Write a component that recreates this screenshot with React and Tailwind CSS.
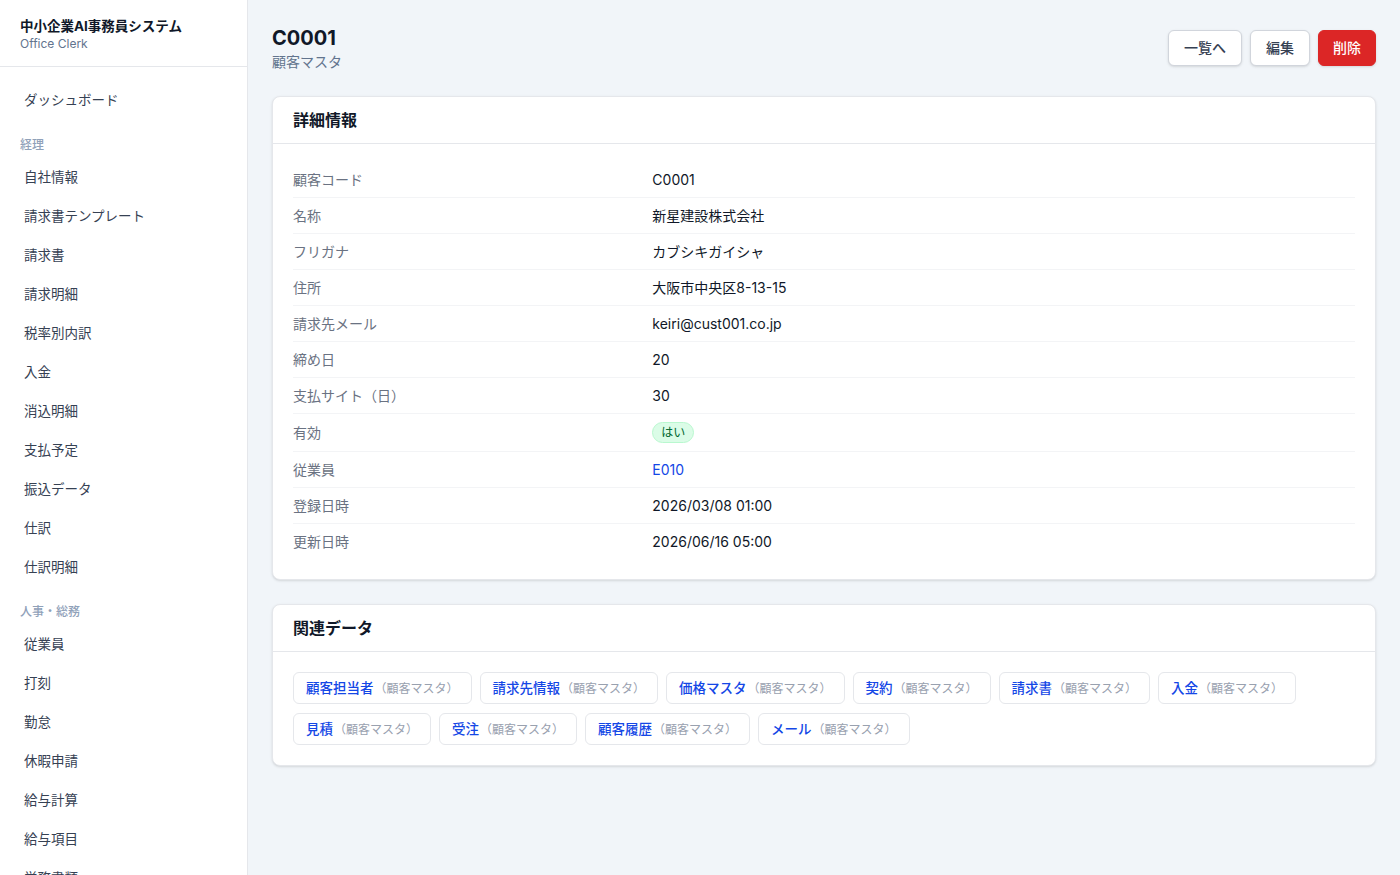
import React from "react";

const FONT = { fontFamily: 'Inter, "Noto Sans CJK JP", "Noto Sans", sans-serif' };

const nav = [
  { type: "item", label: "ダッシュボード" },
  { type: "label", label: "経理" },
  { type: "item", label: "自社情報" },
  { type: "item", label: "請求書テンプレート" },
  { type: "item", label: "請求書" },
  { type: "item", label: "請求明細" },
  { type: "item", label: "税率別内訳" },
  { type: "item", label: "入金" },
  { type: "item", label: "消込明細" },
  { type: "item", label: "支払予定" },
  { type: "item", label: "振込データ" },
  { type: "item", label: "仕訳" },
  { type: "item", label: "仕訳明細" },
  { type: "label", label: "人事・総務" },
  { type: "item", label: "従業員" },
  { type: "item", label: "打刻" },
  { type: "item", label: "勤怠" },
  { type: "item", label: "休暇申請" },
  { type: "item", label: "給与計算" },
  { type: "item", label: "給与項目" },
  { type: "item", label: "労務書類" },
  { type: "item", label: "社会保険" },
];

const rows = [
  ["顧客コード", "C0001"],
  ["名称", "新星建設株式会社"],
  ["フリガナ", "カブシキガイシャ"],
  ["住所", "大阪市中央区8-13-15"],
  ["請求先メール", "keiri@cust001.co.jp"],
  ["締め日", "20"],
  ["支払サイト（日）", "30"],
  ["有効", "badge"],
  ["従業員", "link"],
  ["登録日時", "2026/03/08 01:00"],
  ["更新日時", "2026/06/16 05:00"],
];

const related = [
  "顧客担当者",
  "請求先情報",
  "価格マスタ",
  "契約",
  "請求書",
  "入金",
  "見積",
  "受注",
  "顧客履歴",
  "メール",
];

export default function App() {
  return (
    <div style={FONT} className="flex h-screen w-full overflow-hidden bg-[#f1f5f9] text-gray-900">
      <aside className="flex w-[248px] shrink-0 flex-col overflow-hidden border-r border-gray-200 bg-white">
        <div className="border-b border-gray-200 px-5 pb-[14px] pt-4">
          <div className="text-[13.5px] font-bold leading-5 text-gray-900">中小企業AI事務員システム</div>
          <div className="text-xs leading-4 text-slate-500">Office Clerk</div>
        </div>
        <nav className="flex flex-col px-3 pt-[14px]">
          {nav.map((n, i) =>
            n.type === "label" ? (
              <div key={i} className="px-2 pb-[5px] pt-[17px] text-xs font-medium leading-4 text-slate-400">
                {n.label}
              </div>
            ) : (
              <div key={i} className="rounded-md px-3 py-2.5 text-[13.5px] leading-[19px] text-gray-700">
                {n.label}
              </div>
            )
          )}
        </nav>
      </aside>

      <main className="flex-1 overflow-hidden p-6">
        <div className="mb-6 flex items-center justify-between">
          <div>
            <h1 className="text-xl font-bold leading-7 text-gray-900">C0001</h1>
            <div className="text-sm leading-5 text-slate-500">顧客マスタ</div>
          </div>
          <div className="flex items-center gap-2">
            <button className="h-9 rounded-md border border-gray-300 bg-white px-[15px] text-sm font-medium text-gray-700 shadow-sm">一覧へ</button>
            <button className="h-9 rounded-md border border-gray-300 bg-white px-[15px] text-sm font-medium text-gray-700 shadow-sm">編集</button>
            <button className="h-9 rounded-md border border-[#dc2626] bg-[#dc2626] px-3.5 text-sm font-medium text-white shadow-sm">削除</button>
          </div>
        </div>

        <section className="mb-6 rounded-lg border border-gray-200 bg-white shadow-sm">
          <div className="border-b border-gray-200 px-5 py-3 text-base font-bold leading-[22px] text-gray-900">詳細情報</div>
          <dl className="px-5 pb-5 pt-[18px]">
            {rows.map(([k, v], i) => (
              <div
                key={k}
                className={`grid grid-cols-3 items-center gap-4 py-2 text-sm leading-[19px] ${i > 0 ? "border-t border-gray-100" : ""}`}
              >
                <dt className="text-gray-500">{k}</dt>
                <dd className="col-span-2 text-gray-900">
                  {v === "badge" ? (
                    <span className="inline-flex items-center rounded-full border border-green-200 bg-green-100 px-2 py-0.5 text-xs leading-[15px] text-green-800">
                      はい
                    </span>
                  ) : v === "link" ? (
                    <span className="text-blue-700">E010</span>
                  ) : (
                    v
                  )}
                </dd>
              </div>
            ))}
          </dl>
        </section>

        <section className="rounded-lg border border-gray-200 bg-white shadow-sm">
          <div className="border-b border-gray-200 px-5 py-3 text-base font-bold leading-[22px] text-gray-900">関連データ</div>
          <div className="flex flex-wrap gap-x-2 gap-y-[9px] p-5">
            {related.map((r) => (
              <span
                key={r}
                className="flex h-8 items-center rounded-md border border-gray-200 bg-white px-3"
              >
                <span className="text-[13.5px] leading-5">
                  <span className="font-medium text-blue-700">{r}</span>
                  <span className="ml-px text-xs text-gray-400">（顧客マスタ）</span>
                </span>
              </span>
            ))}
          </div>
        </section>
      </main>
    </div>
  );
}
